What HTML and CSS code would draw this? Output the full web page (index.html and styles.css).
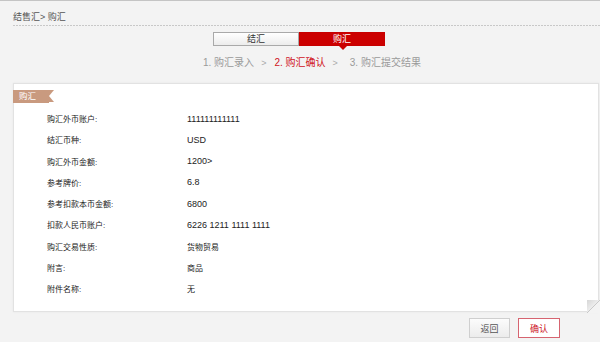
FILE: index.html
```html
<!DOCTYPE html>
<html lang="zh-CN">
<head>
<meta charset="utf-8">
<title>购汇</title>
<link rel="stylesheet" href="styles.css">
</head>
<body>
<div class="page">
  <div class="crumb">结售汇&gt; 购汇</div>
  <div class="dots"></div>
  <div class="tabs">
    <div class="tab">结汇</div>
    <div class="tab active">购汇</div>
  </div>
  <div class="steps">
    <span class="step">1. 购汇录入</span>
    <span class="sep">&gt;</span>
    <span class="step current">2. 购汇确认</span>
    <span class="sep">&gt;</span>
    <span class="step last">3. 购汇提交结果</span>
  </div>
  <div class="card">
    <div class="ribbon">购汇</div>
    <div class="rows">
      <div class="label">购汇外币账户:</div><div class="value num">111111111111</div>
      <div class="label">结汇币种:</div><div class="value num">USD</div>
      <div class="label">购汇外币金额:</div><div class="value num">1200&gt;</div>
      <div class="label">参考牌价:</div><div class="value num">6.8</div>
      <div class="label">参考扣款本币金额:</div><div class="value num">6800</div>
      <div class="label">扣款人民币账户:</div><div class="value num">6226 1211 1111 1111</div>
      <div class="label">购汇交易性质:</div><div class="value">货物贸易</div>
      <div class="label">附言:</div><div class="value">商品</div>
      <div class="label">附件名称:</div><div class="value">无</div>
    </div>
  </div>
  <div class="actions">
    <button class="btn back">返回</button>
    <button class="btn confirm">确认</button>
  </div>
</div>
</body>
</html>
```

FILE: styles.css
```css
html, body {
  margin: 0;
  padding: 0;
  background: #f3f3f3;
}
body {
  font-family: "Liberation Sans", "Noto Sans CJK SC", sans-serif;
  color: #333;
}
.page {
  width: 600px;
  height: 342px;
  border-top: 1px solid #c4c4c4;
  box-sizing: border-box;
  overflow: hidden;
}
.crumb {
  margin-left: 13px;
  padding-top: 9px;
  height: 15px;
  line-height: 14px;
  font-size: 9px;
  color: #555;
}
.dots {
  margin-left: 13px;
  height: 1px;
  background: repeating-linear-gradient(to right, #c8c8c8 0 2px, transparent 2px 3px);
}
.tabs {
  display: flex;
  margin: 6px 0 0 213px;
  height: 14px;
}
.tab {
  position: relative;
  width: 86px;
  height: 14px;
  box-sizing: border-box;
  line-height: 12px;
  text-align: center;
  font-size: 9px;
  color: #333;
  border: 1px solid #a9a9a9;
  background: linear-gradient(#ffffff, #ececec);
}
.tab.active {
  border-color: #c70000;
  background: #cc0000;
  color: #fff;
}
.tab.active::after {
  content: "";
  position: absolute;
  left: 39px;
  bottom: -5px;
  border-left: 4px solid transparent;
  border-right: 4px solid transparent;
  border-top: 4px solid #cc0000;
}
.steps {
  display: flex;
  align-items: center;
  margin: 10px 0 0 203px;
  height: 14px;
  line-height: 14px;
  font-size: 10px;
  color: #9a9a9a;
}
.step.current {
  color: #d0141c;
}
.sep {
  margin: 0 8px 0 7px;
  font-size: 9px;
  color: #aaa;
}
.step.last {
  margin-left: 4px;
}
.card {
  position: relative;
  margin: 13px 1px 0 13px;
  height: 229px;
  box-sizing: border-box;
  background: #fff;
  border: 1px solid #e2e2e2;
  box-shadow: 0 0 2px rgba(0,0,0,0.06);
  padding-top: 6px;
}
.card::after {
  content: "";
  position: absolute;
  right: -2px;
  bottom: -2px;
  width: 13px;
  height: 13px;
  background: linear-gradient(135deg, #d6d6d6 0%, #ededed 48%, #c9c9c9 50%, #f3f3f3 52%);
}
.ribbon {
  position: relative;
  width: 30px;
  height: 13px;
  line-height: 13px;
  padding-left: 6px;
  margin-left: -1px;
  font-size: 8.5px;
  color: #fff;
  background: #c99a7f;
}
.ribbon::after {
  content: "";
  position: absolute;
  right: -5px;
  top: 0;
  border-top: 6.5px solid #c99a7f;
  border-bottom: 6.5px solid #c99a7f;
  border-right: 5px solid transparent;
}
.rows {
  display: grid;
  grid-template-columns: 140px 1fr;
  grid-auto-rows: 21.25px;
  margin: 5px 0 0 33px;
  align-items: center;
}
.label {
  font-size: 8px;
  color: #222;
}
.value {
  font-size: 8px;
  color: #222;
}
.value.num {
  font-size: 9px;
}
.actions {
  display: flex;
  justify-content: flex-end;
  gap: 8px;
  margin: 6px 40px 0 0;
}
.btn {
  width: 41px;
  height: 20px;
  padding: 0;
  font-family: "Liberation Sans", "Noto Sans CJK SC", sans-serif;
  font-size: 9px;
  border: 1px solid #cfcfcf;
  background: linear-gradient(#fcfcfc, #ececec);
  color: #555;
  box-sizing: border-box;
}
.btn.confirm {
  width: 42px;
  border: 1px solid #d66470;
  background: #fff;
  color: #cc1122;
}
```
